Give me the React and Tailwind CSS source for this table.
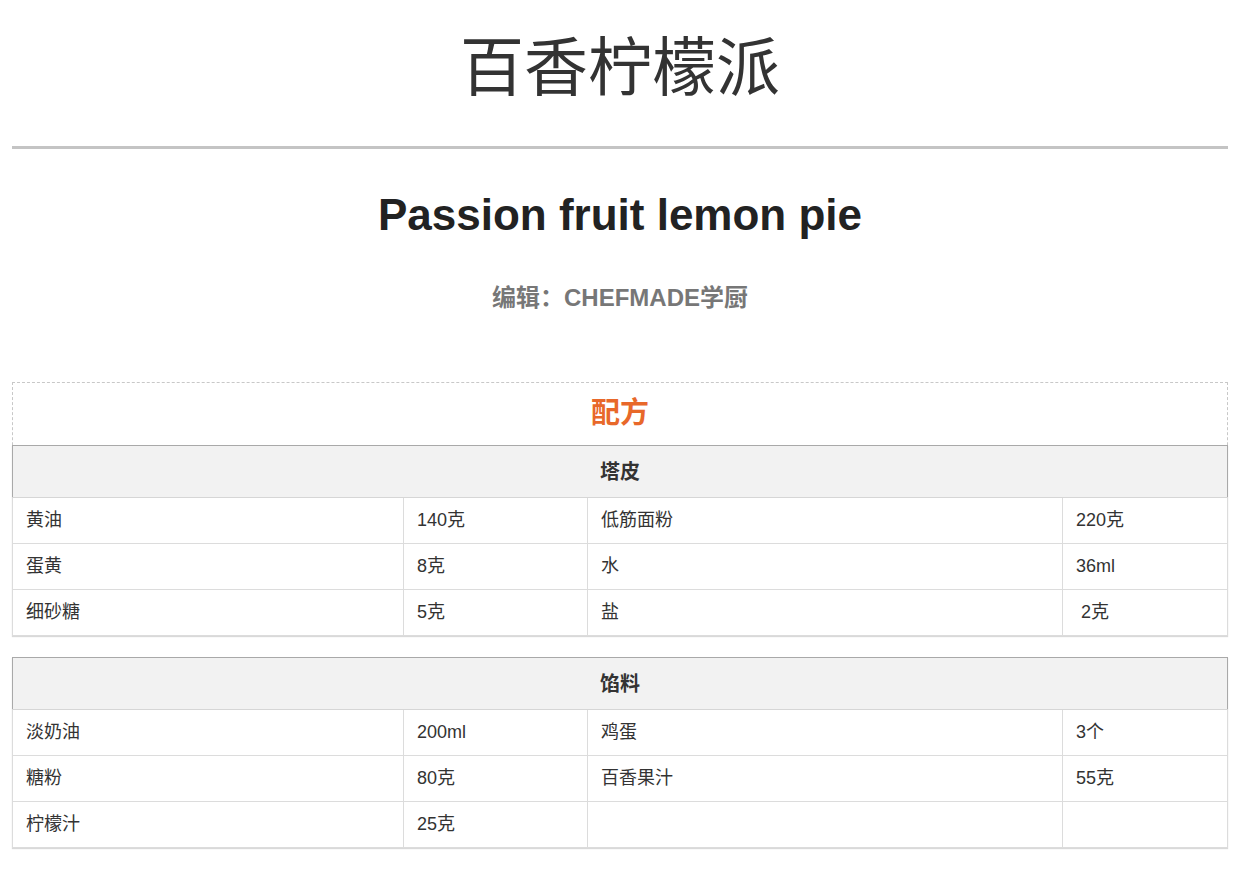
const font = { fontFamily: '"Liberation Sans", Arial, "Noto Sans CJK SC", sans-serif' }

const crust = [
    ['黄油', '140克', '低筋面粉', '220克'],
    ['蛋黄', '8克', '水', '36ml'],
    ['细砂糖', '5克', '盐', ' 2克'],
]

const filling = [
    ['淡奶油', '200ml', '鸡蛋', '3个'],
    ['糖粉', '80克', '百香果汁', '55克'],
    ['柠檬汁', '25克', '', ''],
]

function RecipeTable({ title, rows }) {
    return (
        <table className="w-full border-collapse border border-[#a9a9a9] shadow-[0_1px_1px_rgba(0,0,0,0.15)] text-[18px] text-[#333]">
            <colgroup>
                <col className="w-[391px]" />
                <col className="w-[184px]" />
                <col className="w-[475px]" />
                <col />
            </colgroup>
            <thead>
                <tr className="h-[52px] bg-[#f2f2f2]">
                    <th colSpan={4} className="border-b border-[#d6d6d6] text-[20px] font-bold text-[#333] text-center">
                        {title}
                    </th>
                </tr>
            </thead>
            <tbody>
                {rows.map((row, i) => (
                    <tr key={i} className="h-[46px]">
                        {row.map((cell, j) => (
                            <td
                                key={j}
                                className="border border-[#dcdcdc] px-[13px] whitespace-pre"
                            >
                                {cell}
                            </td>
                        ))}
                    </tr>
                ))}
            </tbody>
        </table>
    )
}

export default function App() {
    return (
        <div className="w-[1240px] min-h-[874px] bg-white" style={font}>
            <div className="px-[12px] pt-[28px]">
                <h1 className="text-center text-[64px] leading-[80px] text-[#333] font-normal">
                    百香柠檬派
                </h1>

                <div className="mt-[38px] h-[3px] bg-[#c4c4c4]" />

                <h2 className="mt-[39px] text-center text-[44px] leading-[54px] font-bold text-[#222]">
                    Passion fruit lemon pie
                </h2>

                <p className="mt-[40px] text-center text-[24px] leading-[32px] font-bold text-[#777]">
                    编辑：CHEFMADE学厨
                </p>

                <div className="mt-[68px] border-t border-x border-dashed border-[#c8c8c8]">
                    <div className="h-[62px] flex items-center justify-center text-[29px] font-bold text-[#e8682a]">
                        配方
                    </div>
                    <div className="-mx-px">
                        <RecipeTable title="塔皮" rows={crust} />
                    </div>
                </div>

                <div className="mt-[21px]">
                    <RecipeTable title="馅料" rows={filling} />
                </div>
            </div>
        </div>
    )
}
